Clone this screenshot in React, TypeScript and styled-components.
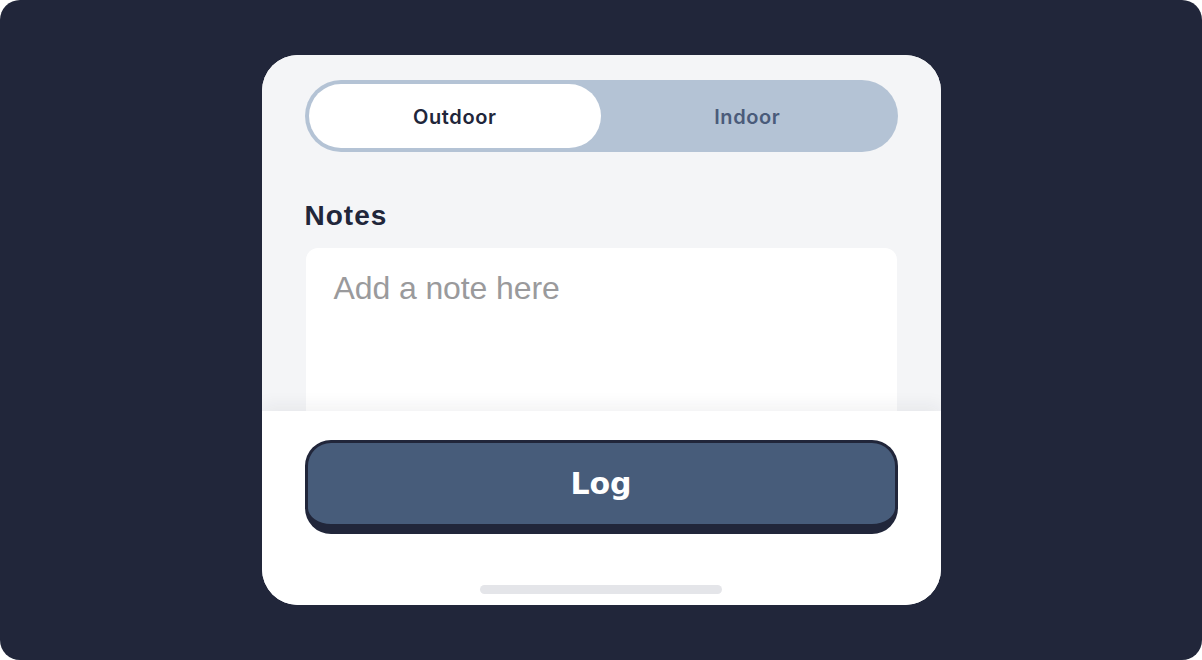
import React, { useState } from "react";
import styled, { createGlobalStyle } from "styled-components";

const GlobalStyle = createGlobalStyle`
  html, body { margin: 0; padding: 0; background: #ffffff; }
  #root { width: 1202px; height: 660px; }
  * { box-sizing: border-box; }
`;

const Backdrop = styled.div`
  width: 1202px;
  height: 660px;
  background: #21263a;
  border-radius: 20px;
  display: flex;
  align-items: center;
  justify-content: center;
`;

const Card = styled.div`
  width: 679px;
  height: 550px;
  border-radius: 36px;
  overflow: hidden;
  display: flex;
  flex-direction: column;
  background: #ffffff;
`;

const TopSection = styled.div`
  height: 356px;
  flex: none;
  background: #f4f5f7;
  padding: 25px 43px 0 43px;
  overflow: hidden;
  display: flex;
  flex-direction: column;
`;

const Segmented = styled.div`
  height: 72px;
  flex: none;
  background: #b4c3d5;
  border-radius: 36px;
  padding: 4px;
  display: grid;
  grid-template-columns: 1fr 1fr;
`;

const Segment = styled.button<{ $active: boolean }>`
  border: none;
  border-radius: 32px;
  background: ${(p) => (p.$active ? "#ffffff" : "transparent")};
  color: ${(p) => (p.$active ? "#21263a" : "#4a5b7a")};
  font-family: Inter, "Noto Sans", sans-serif;
  font-weight: 600;
  font-size: 20px;
  letter-spacing: 0.6px;
  cursor: pointer;
  padding: 2px 0 0 0;
`;

const Label = styled.div`
  margin-top: 48px;
  flex: none;
  font-family: "Liberation Sans", Arial, sans-serif;
  font-weight: 700;
  font-size: 28px;
  letter-spacing: 1px;
  color: #21263a;
  line-height: 32px;
`;

const NoteBox = styled.div`
  margin-top: 16px;
  margin-left: 1px;
  margin-right: 1px;
  height: 200px;
  flex: none;
  background: #ffffff;
  border-radius: 12px;
  padding: 21px 28px;
  font-family: "Liberation Sans", Arial, sans-serif;
  font-size: 32px;
  letter-spacing: -0.1px;
  color: #9a9a9c;
  line-height: 38px;
`;

const BottomSection = styled.div`
  flex: 1;
  position: relative;
  background: #ffffff;
  box-shadow: 0 -6px 16px rgba(30, 35, 50, 0.06);
  padding: 29px 43px 0 43px;
  display: flex;
  flex-direction: column;
  align-items: center;
`;

const LogButton = styled.button`
  width: 100%;
  height: 94px;
  flex: none;
  border: 3px solid #21263a;
  border-bottom-width: 10px;
  border-radius: 26px;
  background: #475c7a;
  color: #ffffff;
  font-family: "DejaVu Sans", sans-serif;
  font-weight: 700;
  font-size: 30px;
  cursor: pointer;
  padding: 0;
`;

const HomeIndicator = styled.div`
  margin-top: 51px;
  width: 242px;
  height: 9px;
  border-radius: 5px;
  background: #e4e5e9;
`;

export default function App() {
  const [mode, setMode] = useState<"outdoor" | "indoor">("outdoor");
  return (
    <>
      <GlobalStyle />
      <Backdrop>
        <Card>
          <TopSection>
            <Segmented>
              <Segment $active={mode === "outdoor"} onClick={() => setMode("outdoor")}>
                Outdoor
              </Segment>
              <Segment $active={mode === "indoor"} onClick={() => setMode("indoor")}>
                Indoor
              </Segment>
            </Segmented>
            <Label>Notes</Label>
            <NoteBox>Add a note here</NoteBox>
          </TopSection>
          <BottomSection>
            <LogButton>Log</LogButton>
            <HomeIndicator />
          </BottomSection>
        </Card>
      </Backdrop>
    </>
  );
}
